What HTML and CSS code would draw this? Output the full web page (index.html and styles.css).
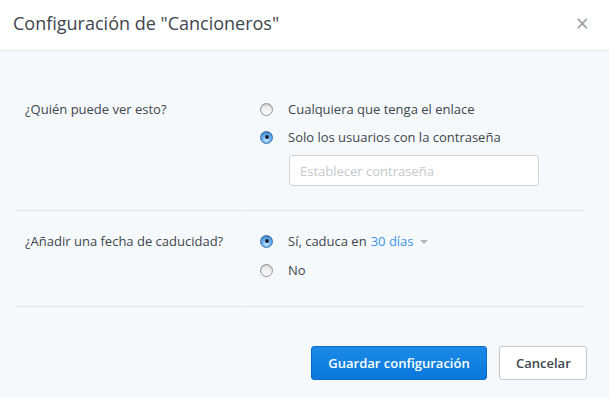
FILE: index.html
```html
<!DOCTYPE html>
<html lang="es">
<head>
    <meta charset="UTF-8">
    <title>Configuración de "Cancioneros"</title>
    <link rel="stylesheet" href="styles.css">
</head>
<body>
    <div class="modal">
        <div class="modal-header">
            <h1 class="modal-title">Configuración de "Cancioneros"</h1>
            <span class="modal-close">&times;</span>
        </div>

        <div class="modal-body">
            <div class="setting-row">
                <div class="setting-label">¿Quién puede ver esto?</div>
                <div class="setting-options">
                    <label class="option">
                        <span class="radio"></span>
                        <span>Cualquiera que tenga el enlace</span>
                    </label>
                    <label class="option">
                        <span class="radio checked"></span>
                        <span>Solo los usuarios con la contraseña</span>
                    </label>
                    <input class="text-input" type="text" placeholder="Establecer contraseña">
                </div>
            </div>

            <div class="setting-row second">
                <div class="setting-label">¿Añadir una fecha de caducidad?</div>
                <div class="setting-options">
                    <label class="option">
                        <span class="radio checked"></span>
                        <span>Sí, caduca en</span>
                        <span class="dropdown">30 días</span>
                        <span class="caret"></span>
                    </label>
                    <label class="option">
                        <span class="radio"></span>
                        <span>No</span>
                    </label>
                </div>
            </div>

            <div class="modal-footer">
                <button class="btn btn-primary">Guardar configuración</button>
                <button class="btn btn-default">Cancelar</button>
            </div>
        </div>
    </div>
</body>
</html>
```

FILE: styles.css
```css
/* base */
body {
    margin: 0;
    padding: 0;
    font-family: 'Open Sans', 'Noto Sans', sans-serif;
    color: #3d464d;
    background: #f6f9fc;
}

.modal {
    width: 609px;
    height: 397px;
    background: #f6f9fc;
}

.modal-header {
    height: 51px;
    box-sizing: border-box;
    background: #fff;
    border-bottom: 1px solid #e6eaee;
    display: flex;
    align-items: center;
    justify-content: space-between;
    padding: 0 20px 0 13px;
}

.modal-title {
    margin: 0;
    font-size: 18px;
    font-weight: 400;
    color: #3d464d;
    position: relative;
    top: -2px;
}

.modal-close {
    font-size: 23px;
    line-height: 1;
    color: #9a9ea2;
    position: relative;
    top: -2px;
}

.modal-body {
    padding: 24px 23px 0 16px;
}

/* rows */
.setting-row {
    display: grid;
    grid-template-columns: 230px 338px;
    column-gap: 2px;
}

.setting-label,
.setting-options {
    border-bottom: 1px solid #dde2e7;
    padding: 24px 0 24px;
}

.setting-label {
    padding-left: 9px;
    font-size: 13px;
    line-height: 20px;
}

.setting-options {
    padding-left: 12px;
}

.second .setting-label,
.second .setting-options {
    padding-top: 20px;
    padding-bottom: 26px;
}

.option {
    display: flex;
    align-items: center;
    height: 20px;
    margin-bottom: 8px;
    font-size: 13px;
    line-height: 20px;
}

.second .option {
    margin-bottom: 9px;
}

.second .option:last-child {
    margin-bottom: 0;
}

.radio {
    width: 11px;
    height: 11px;
    border-radius: 50%;
    border: 1px solid #8e9397;
    background: linear-gradient(#e4e4e4, #ffffff);
    box-shadow: inset 0 1px 1px rgba(0, 0, 0, 0.15);
    margin-right: 15px;
    flex-shrink: 0;
    position: relative;
}

.radio.checked {
    border-color: #3a6fa8;
    background: radial-gradient(circle at 50% 70%, #c9e6ff 0%, #6fb3f2 45%, #2b7fd6 100%);
}

.radio.checked::after {
    content: '';
    position: absolute;
    width: 4px;
    height: 4px;
    border-radius: 50%;
    background: #17222e;
    left: 3.5px;
    top: 3.5px;
}

.dropdown {
    color: #3d95e6;
    margin-left: 4px;
}

.caret {
    width: 0;
    height: 0;
    border-left: 4px solid transparent;
    border-right: 4px solid transparent;
    border-top: 4px solid #b3b8bd;
    margin-left: 6px;
    margin-top: 2px;
}

.text-input {
    display: block;
    width: 250px;
    height: 31px;
    box-sizing: border-box;
    margin: 0 0 0 29px;
    padding: 0 10px;
    border: 1px solid #cfd4d9;
    border-radius: 3px;
    background: #fff;
    font-family: 'Open Sans', 'Noto Sans', sans-serif;
    font-size: 13px;
    color: #3d464d;
}

.text-input::placeholder {
    color: #c4c9cd;
}

/* footer */
.modal-footer {
    display: flex;
    justify-content: flex-end;
    gap: 12px;
    padding-top: 39px;
    margin-right: -1px;
}

.btn {
    height: 34px;
    font-family: 'Open Sans', 'Noto Sans', sans-serif;
    font-size: 13px;
    font-weight: 600;
    border-radius: 3px;
    padding: 0 16px;
}

.btn-primary {
    width: 176px;
    color: #fff;
    background: linear-gradient(#1a8ae6, #0a78dc);
    border: 1px solid #0a6dc8;
}

.btn-default {
    width: 88px;
    color: #3d464d;
    background: #fff;
    border: 1px solid #c2c7cc;
}
```
